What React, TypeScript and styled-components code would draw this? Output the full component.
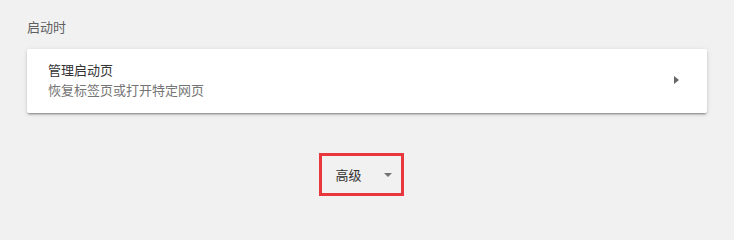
import * as React from 'react';
import styled, { createGlobalStyle } from 'styled-components';

const GlobalStyle = createGlobalStyle`
  html, body {
    margin: 0;
    padding: 0;
    background: #f1f1f1;
  }
  body {
    font-family: 'Noto Sans CJK SC', 'Noto Sans', 'Liberation Sans', sans-serif;
    -webkit-font-smoothing: antialiased;
  }
`;

const Page = styled.div`
  box-sizing: border-box;
  width: 734px;
  height: 204px;
  padding: 17px 27px 0;
  display: flex;
  flex-direction: column;
`;

const SectionTitle = styled.div`
  font-size: 13px;
  line-height: 20px;
  color: #5f5f5f;
  height: 20px;
  margin-bottom: 12px;
`;

const Card = styled.div`
  background: #fff;
  border-radius: 2px;
  box-shadow: 0 2px 2px rgba(0, 0, 0, 0.14), 0 1px 5px rgba(0, 0, 0, 0.12), 0 3px 1px -2px rgba(0, 0, 0, 0.2);
`;

const Row = styled.div`
  display: flex;
  align-items: center;
  padding: 11px 28px 13px 21px;
  cursor: pointer;
`;

const RowText = styled.div`
  flex: 1;
  display: flex;
  flex-direction: column;
`;

const RowTitle = styled.div`
  font-size: 13px;
  line-height: 20px;
  color: #333;
`;

const RowSub = styled.div`
  font-size: 13px;
  line-height: 20px;
  color: #757575;
`;

const Arrow = styled.span<{ $dir: 'right' | 'down' }>`
  display: inline-block;
  width: 0;
  height: 0;
  ${(p) =>
    p.$dir === 'right'
      ? `border-top: 4px solid transparent;
         border-bottom: 4px solid transparent;
         border-left: 5px solid #666;`
      : `border-left: 4.5px solid transparent;
         border-right: 4.5px solid transparent;
         border-top: 4.5px solid #737373;`}
`;

const Footer = styled.div`
  display: flex;
  justify-content: center;
  padding: 40px 12px 0 0;
`;

const AdvancedButton = styled.button`
  box-sizing: border-box;
  width: 85px;
  height: 43px;
  display: flex;
  align-items: center;
  gap: 22px;
  padding: 0 0 0 14px;
  background: transparent;
  border: 3px solid #e8383d;
  font-family: inherit;
  font-size: 13px;
  color: #333;
  cursor: pointer;
`;

export default function App() {
  return (
    <>
      <GlobalStyle />
      <Page>
        <SectionTitle>启动时</SectionTitle>
        <Card>
          <Row>
            <RowText>
              <RowTitle>管理启动页</RowTitle>
              <RowSub>恢复标签页或打开特定网页</RowSub>
            </RowText>
            <Arrow $dir="right" />
          </Row>
        </Card>
        <Footer>
          <AdvancedButton>
            <span>高级</span>
            <Arrow $dir="down" />
          </AdvancedButton>
        </Footer>
      </Page>
    </>
  );
}
